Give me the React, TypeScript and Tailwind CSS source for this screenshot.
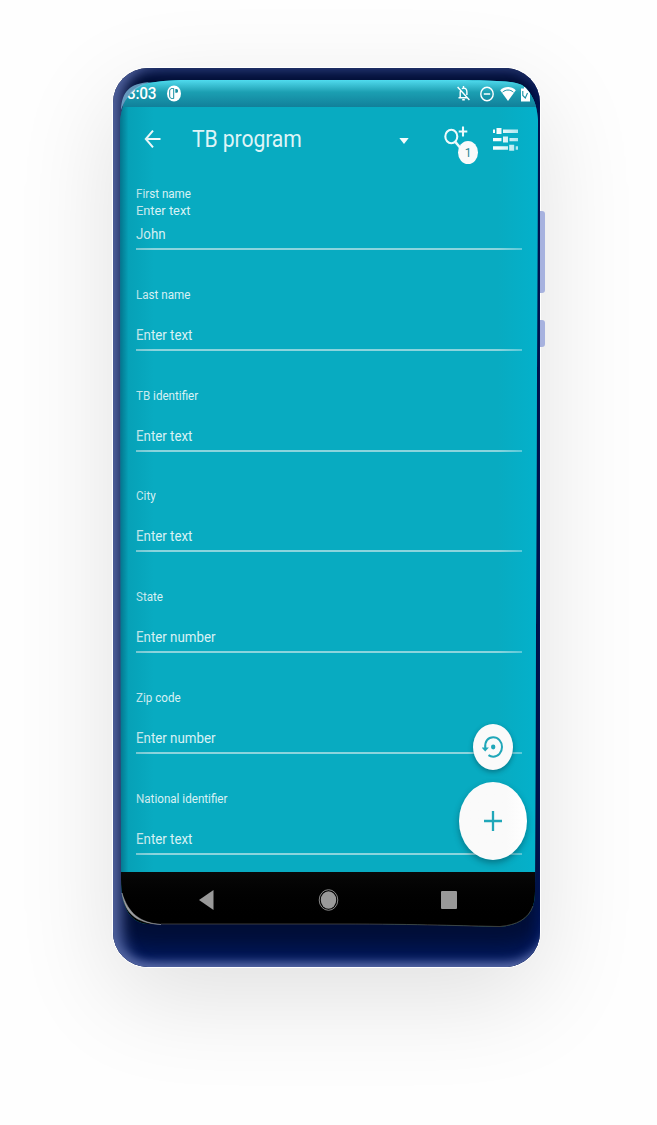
import React from "react";

type Field = { label: string; hint?: string; value: string };

const fields: Field[] = [
  { label: "First name", hint: "Enter text", value: "John" },
  { label: "Last name", value: "Enter text" },
  { label: "TB identifier", value: "Enter text" },
  { label: "City", value: "Enter text" },
  { label: "State", value: "Enter number" },
  { label: "Zip code", value: "Enter number" },
  { label: "National identifier", value: "Enter text" },
];

function StatusBar() {
  return (
    <div className="flex h-[27px] shrink-0 items-center bg-linear-to-b from-[#4fdbee] via-[#1b9fb2] via-45% to-[#11809a] pl-[7px] text-white">
      <span className="w-[40px] origin-left scale-x-[0.96] text-[16px] leading-none font-medium tracking-[-0.3px]">3:03</span>
      <svg className="h-[17px] w-[14px]" viewBox="0 0 14 17">
        <ellipse cx="7" cy="8.5" rx="7" ry="8" fill="#fff" />
        <path d="M6.700 3.500H5.200C3.500 3.500 2.700 4.600 2.700 6v5c0 1.500.8 2.500 2.500 2.500h1.500z" fill="none" stroke="#168fa3" strokeWidth="1" />
        <path d="M8.300 4h1.200c1 0 1.500.8 1.500 1.900S10.500 7.800 9.500 7.800H8.300z" fill="#168fa3" />
      </svg>
      <svg className="ml-[276px] h-[17px] w-[13px]" viewBox="0 0 13 17" fill="none" stroke="#fff" strokeWidth="1.400">
        <path d="M.6 2 12.400 15M1.500 12.800h8.500M3.200 12.800V7.500c0-1 .2-1.800.7-2.400M5 3.700c.4-.4 1-.6 1.600-.6 2 0 3.300 1.700 3.300 4v3" />
        <path d="M6.500 1v2.200M5.200 14.800h2.600" />
      </svg>
      <svg className="ml-[10px] h-[16px] w-[14px]" viewBox="0 0 14 16" fill="none" stroke="#fff" strokeWidth="1.400">
        <ellipse cx="7" cy="8" rx="6.200" ry="6.800" />
        <path d="M3.800 8h6.400" strokeWidth="1.500" />
      </svg>
      <svg className="ml-[6px] h-[16px] w-[16px]" viewBox="0 0 16 16">
        <path d="M.2 4.200C4.500-.1 11.500-.1 15.800 4.200L8 15z" fill="#fff" />
        <path d="M2.600 6.200C5.600 3.300 10.400 3.300 13.400 6.200" fill="none" stroke="#168fa3" strokeWidth="1" />
      </svg>
      <svg className="ml-[5px] h-[16px] w-[9px]" viewBox="0 0 9 16">
        <path d="M0 2.500h3V1h3v1.500h3V15.500H0z" fill="#fff" />
        <path d="M1.800 5v4.500L4.300 12 6.500 7" fill="none" stroke="#168fa3" strokeWidth="1.100" />
      </svg>
    </div>
  );
}

function AppBar() {
  return (
    <div className="flex h-[64px] shrink-0 items-center pl-[24px]">
      <svg className="h-[20px] w-[17px]" viewBox="0 0 17 20" fill="none" stroke="#f3fbfc" strokeWidth="2">
        <path d="M16.500 10H1.800M9 1.700 1.800 10 9 18.300" />
      </svg>
      <h1 className="mt-[1px] ml-[31px] w-[207px] origin-left scale-x-[0.92] text-[23px] leading-none font-normal tracking-[-0.1px] whitespace-nowrap text-[#def4f7]">
        TB program
      </h1>
      <svg className="mt-[3px] h-[6px] w-[10px]" viewBox="0 0 10 6">
        <path d="M.3 0h9.400L5 6z" fill="#f3fbfc" />
      </svg>
      <div className="relative ml-[35px] h-[40px] w-[34px]">
        <svg className="h-[40px] w-[34px]" viewBox="0 0 34 40" fill="none" stroke="#eefafb">
          <ellipse cx="7.300" cy="17.500" rx="6" ry="6.700" strokeWidth="2.100" />
          <path d="m11 22.500 5 6" strokeWidth="2.600" />
          <path d="M19 7.500v10M14.700 12.500h8.600" strokeWidth="2.100" />
        </svg>
        <span className="absolute top-[22px] left-[14px] flex h-[23px] w-[20px] items-center justify-center rounded-[50%] bg-[#fafafa] text-[12px] text-[#2b8996]">
          1
        </span>
      </div>
      <svg className="ml-[15px] h-[23px] w-[25px]" viewBox="0 0 25 23" fill="#f5fcfc">
        <path d="M0 1.500h2v3.500H0zM3.500 0h5v6h-5zM10 1.500h15v3.500H10zM0 10h8.500v3.300H0zM10 8.500h5v6h-5zM16.500 10H25v3.300h-8.500zM0 18.300h15v3.400H0zM16.200 16.800h5v6h-5zM22.700 18.300H25v3.400h-2.300z" />
      </svg>
    </div>
  );
}

function FieldRow({ label, hint, value }: Field) {
  return (
    <div className="flex h-[100.750px] shrink-0 flex-col justify-end text-[#d9f2f5]">
      <div className="h-[15.500px] origin-left scale-x-[0.93] text-[12.500px] leading-[16px]">{label}</div>
      <div className="h-[25.500px] origin-left scale-x-[0.95] text-[13.500px] leading-[16px]">{hint}</div>
      <div className="h-[21px] origin-left scale-x-[0.95] text-[14px] leading-[15px]">{value}</div>
      <div className="h-[2px] bg-[#8bd4dd]" />
    </div>
  );
}

function NavBar() {
  return (
    <div className="flex h-[55px] shrink-0 bg-linear-to-b from-[#080808] to-black pt-[17px] pl-[79px]">
      <svg className="h-[22px] w-[15px]" viewBox="0 0 15 22">
        <path d="M0 11 14.500 1v20z" fill="#999" />
      </svg>
      <svg className="ml-[104px] h-[22px] w-[21px]" viewBox="0 0 21 22">
        <ellipse cx="10.500" cy="11" rx="9.300" ry="10.300" fill="none" stroke="#888" />
        <ellipse cx="10.500" cy="11" rx="7.700" ry="8.800" fill="#999" />
      </svg>
      <div className="mt-[2px] ml-[102px] h-[18px] w-[16px] rounded-[1px] bg-[#999]" />
    </div>
  );
}

export default function App() {
  return (
    <main className="h-[1125px] w-[657px] overflow-hidden bg-[#fefefe] pt-[68px] pl-[113px] font-[Roboto,sans-serif]">
      <div className="relative h-[899px] w-[427px] rounded-[35px] bg-[#000e36] pt-[12px] pl-[7px] shadow-[0_0_0_1px_#fff,0_30px_100px_rgba(0,0,0,0.12)]">
        <div className="absolute top-[143px] left-[427px] h-[82px] w-[5px] rounded-r-[3px] bg-[#a7b2df]" />
        <div className="absolute top-[252px] left-[427px] h-[27px] w-[5px] rounded-r-[3px] bg-[#a7b2df]" />
        <div className="absolute inset-0 rounded-[35px] shadow-[inset_17px_0_14px_-8px_#52649f,inset_0_-14px_10px_-9px_#5a6ba8,inset_0_-34px_24px_-16px_#001a62,inset_0_16px_10px_-10px_#1b2b61,inset_-16px_0_14px_-13px_#00185c]" />
        <div className="relative flex h-[847px] w-[418px] flex-col overflow-hidden bg-[#08abc1] [clip-path:path('M0_45C1_20_12_4_32_2.500C42_1_52_0_65_0H345C375_0.500_393_1_402_5C409_10_417_20_418_40L415_811C415_835_404_844_380_847C345_846_300_844_220_844H28C11_843_1_829_1_799Z')]">
          <StatusBar />
          <AppBar />
          <div className="flex h-[701px] shrink-0 flex-col overflow-hidden px-[16px]">
            <div className="-mt-[21.750px] flex flex-col">
              {fields.map((field) => (
                <FieldRow key={field.label} {...field} />
              ))}
            </div>
          </div>
          <NavBar />
          <div className="pointer-events-none absolute top-[27px] left-0 h-[765px] w-[34px] bg-linear-to-r from-[#00506a]/60 via-[#007990]/20 via-25% to-transparent" />
          <div className="pointer-events-none absolute top-[27px] right-0 h-[765px] w-[40px] bg-linear-to-r from-transparent to-[#00b5d2]/60" />
          <button className="absolute top-[644px] left-[353px] flex h-[46px] w-[40px] items-center justify-center rounded-[50%] bg-[#fafafa] shadow-[0_2px_5px_rgba(0,40,50,0.4)]">
            <svg className="h-[22px] w-[22px]" viewBox="0 0 22 22" fill="none" stroke="#20a7b9" strokeWidth="2">
              <path d="M3.300 12C2.500 5.500 6 1.300 11.200 1.300c5 0 8.800 4.300 8.800 9.700s-3.800 9.700-8.800 9.700c-1.800 0-3.400-.6-4.700-1.600" />
              <path d="M-.5 11.500h7.400L3.200 15.500z" fill="#20a7b9" stroke="none" />
              <ellipse cx="11.200" cy="11" rx="2.200" ry="2.400" fill="#20a7b9" stroke="none" />
            </svg>
          </button>
          <button className="absolute top-[702px] left-[339px] flex h-[78px] w-[68px] items-center justify-center rounded-[50%] bg-linear-to-r from-[#fafafa] via-[#fafafa] via-70% to-white shadow-[0_3px_6px_rgba(0,40,50,0.4)]">
            <svg className="h-[20px] w-[18px]" viewBox="0 0 18 20" fill="none" stroke="#20a7b9" strokeWidth="2.300">
              <path d="M9 0v20M0 10h18" />
            </svg>
          </button>
        </div>
        <svg className="pointer-events-none absolute inset-0 h-[899px] w-[427px]" viewBox="0 0 427 899" fill="none">
          <path d="M8 42C9 24 16 15 38 14C28 17 15 23 8 42Z" fill="#78b6d8" opacity=".8" />
          <path d="M9 825C12 844 21 855 48 856.500C27 855 15 845 9 825Z" fill="#c4c6ca" stroke="#c4c6ca" strokeWidth=".5" opacity=".8" />
          <path d="M48 856H227C310 856 350 858 387 858.500C404 857 415 851 420 838" stroke="#4a4a48" strokeWidth=".8" />
        </svg>
      </div>
    </main>
  );
}
